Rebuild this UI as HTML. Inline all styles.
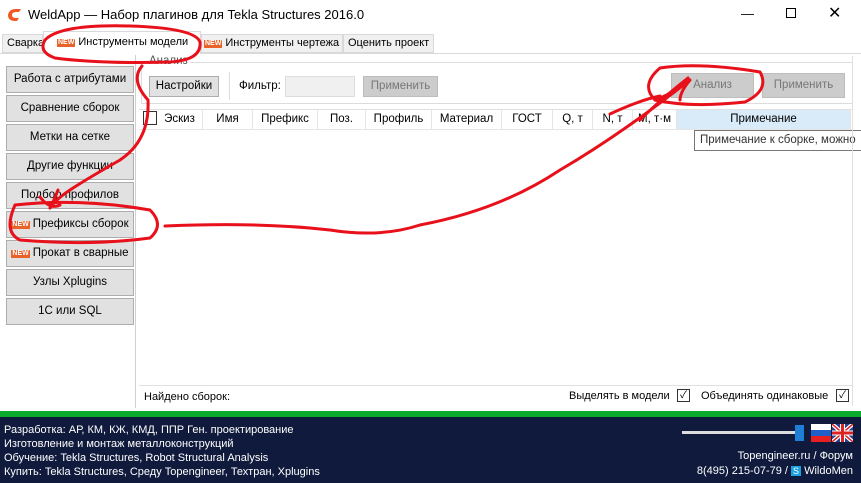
<!DOCTYPE html>
<html><head><meta charset="utf-8"><style>
*{margin:0;padding:0;box-sizing:border-box}
body{width:861px;height:483px;overflow:hidden;background:#fff;font-family:"Liberation Sans","Noto Sans CJK SC",sans-serif;font-size:11.5px;color:#000;position:relative}
.a{position:absolute;white-space:nowrap}
.btn{position:absolute;left:6px;width:128px;height:27px;background:#e1e1e1;border:1px solid #adadad;text-align:center;line-height:25px;font-size:11.5px;white-space:nowrap}
.new{display:inline-block;background:#e8622a;color:#fff;font-size:7px;line-height:8px;padding:0 1px;vertical-align:1px;margin-right:3px;font-weight:bold}
.th{position:absolute;top:110px;height:19px;line-height:19px;text-align:center;border-right:1px solid #e5e5e5;font-size:11.5px;white-space:nowrap;overflow:hidden}
.ft{position:absolute;color:#fff;font-size:11px;left:4px;white-space:nowrap}
.tab{position:absolute;top:34px;height:19px;background:#f0f0f0;border:1px solid #d9d9d9;line-height:17px;white-space:nowrap;font-size:11px;overflow:hidden}
</style></head><body>
<svg class="a" style="left:6px;top:8px" width="16" height="14"><path d="M2 7 Q3 1 10 1 L15 1 L13 4 L10 4 Q6 4 6 7 Q6 10 10 10 L13 10 L11 13 L9 13 Q2 13 2 7Z" fill="#f05a22"/></svg>
<div class="a" style="left:28px;top:7px;font-size:13px">WeldApp — Набор плагинов для Tekla Structures 2016.0</div>
<div class="a" style="left:741px;top:6px;font-size:13px">—</div>
<div class="a" style="left:786px;top:8px;width:10px;height:10px;border:1px solid #000"></div>
<div class="a" style="left:828px;top:3px;font-size:16px">✕</div>
<!-- tabs -->
<div class="a" style="left:0;top:53px;width:861px;height:1px;background:#d9d9d9"></div>
<div class="tab" style="left:2px;width:41px;padding-left:4px">Сварка</div>
<div class="a" style="left:43px;top:31px;width:158px;height:23px;background:#fff;border:1px solid #d9d9d9;border-bottom:none;line-height:21px;padding-left:13px;font-size:11px"><span class="new">NEW</span>Инструменты модели</div>
<div class="tab" style="left:201px;width:142px;padding-left:2px"><span class="new">NEW</span>Инструменты чертежа</div>
<div class="tab" style="left:343px;width:91px;padding-left:4px">Оценить проект</div>
<!-- left panel -->
<div class="a" style="left:135px;top:55px;width:1px;height:353px;background:#d0d0d0"></div>
<div class="btn" style="top:66px">Работа с атрибутами</div>
<div class="btn" style="top:95px">Сравнение сборок</div>
<div class="btn" style="top:124px">Метки на сетке</div>
<div class="btn" style="top:153px">Другие функции</div>
<div class="btn" style="top:182px">Подбор профилов</div>
<div class="btn" style="top:211px"><span class="new">NEW</span>Префиксы сборок</div>
<div class="btn" style="top:240px"><span class="new">NEW</span>Прокат в сварные</div>
<div class="btn" style="top:269px">Узлы Xplugins</div>
<div class="btn" style="top:298px">1С или SQL</div>
<!-- group -->
<div class="a" style="left:141px;top:62px;width:712px;height:42px;border:1px solid #dcdcdc"></div>
<div class="a" style="left:147px;top:55px;background:#fff;padding:0 2px;color:#555">Анализ</div>
<div class="a" style="left:149px;top:76px;width:70px;height:21px;background:#e1e1e1;border:1px solid #adadad;text-align:center;line-height:19px">Настройки</div>
<div class="a" style="left:229px;top:72px;width:1px;height:28px;background:#ddd"></div>
<div class="a" style="left:239px;top:80px">Фильтр:</div>
<div class="a" style="left:285px;top:76px;width:70px;height:21px;background:#f0f0f0;border:1px solid #ddd"></div>
<div class="a" style="left:363px;top:76px;width:75px;height:21px;background:#ccc;border:1px solid #bdbdbd;text-align:center;line-height:19px;color:#777">Применить</div>
<div class="a" style="left:671px;top:73px;width:83px;height:25px;background:#ccc;border:1px solid #bdbdbd;text-align:center;line-height:23px;color:#777">Анализ</div>
<div class="a" style="left:762px;top:73px;width:83px;height:25px;background:#ccc;border:1px solid #bdbdbd;text-align:center;line-height:23px;color:#777">Применить</div>
<!-- table -->
<div class="a" style="left:139px;top:109px;width:714px;height:1px;background:#e0e0e0"></div>
<div class="a" style="left:139px;top:129px;width:714px;height:1px;background:#e5e5e5"></div>
<div class="a" style="left:143px;top:111px;width:14px;height:14px;border:1px solid #333"></div>
<div class="th" style="left:157px;width:46px">Эскиз</div>
<div class="th" style="left:203px;width:50px">Имя</div>
<div class="th" style="left:253px;width:65px">Префикс</div>
<div class="th" style="left:318px;width:48px">Поз.</div>
<div class="th" style="left:366px;width:66px">Профиль</div>
<div class="th" style="left:432px;width:70px">Материал</div>
<div class="th" style="left:502px;width:51px">ГОСТ</div>
<div class="th" style="left:553px;width:40px">Q, т</div>
<div class="th" style="left:593px;width:40px">N, т</div>
<div class="th" style="left:633px;width:44px">М, т·м</div>
<div class="th" style="left:677px;width:174px;background:#d9ebf9">Примечание</div>
<div class="a" style="left:694px;top:130px;width:170px;height:21px;background:#fff;border:1px solid #767676;line-height:19px;padding-left:5px;color:#333;overflow:hidden">Примечание к сборке, можно</div>
<div class="a" style="left:852px;top:56px;width:1px;height:350px;background:#e0e0e0"></div>
<!-- status -->
<div class="a" style="left:139px;top:385px;width:714px;height:1px;background:#e0e0e0"></div>
<div class="a" style="left:144px;top:391px;font-size:11px">Найдено сборок:</div>
<div class="a" style="left:569px;top:390px;font-size:11px">Выделять в модели</div>
<div class="a" style="left:677px;top:389px;width:13px;height:13px;border:1px solid #333;font-size:10px;line-height:11px;text-align:center">✓</div>
<div class="a" style="left:701px;top:390px;font-size:11px">Объединять одинаковые</div>
<div class="a" style="left:836px;top:389px;width:13px;height:13px;border:1px solid #333;font-size:10px;line-height:11px;text-align:center">✓</div>
<!-- footer -->
<div class="a" style="left:0;top:411px;width:861px;height:6px;background:#0aaa2a"></div>
<div class="a" style="left:0;top:417px;width:861px;height:66px;background:#0f1a3c"></div>
<div class="ft" style="top:424px">Разработка: АР, КМ, КЖ, КМД, ППР Ген. проектирование</div>
<div class="ft" style="top:438px">Изготовление и монтаж металлоконструкций</div>
<div class="ft" style="top:452px">Обучение: Tekla Structures, Robot Structural Analysis</div>
<div class="ft" style="top:466px">Купить: Tekla Structures, Среду Topengineer, Техтран, Xplugins</div>
<div class="a" style="left:682px;top:431px;width:120px;height:3px;background:#ddd"></div>
<div class="a" style="left:795px;top:425px;width:9px;height:16px;background:#1d7fd6"></div>
<div class="a" style="left:811px;top:424px;width:20px;height:18px;background:linear-gradient(#fff 33%,#1f5fc9 33% 66%,#e62020 66%)"></div>
<div class="a" style="left:832px;top:424px;width:21px;height:18px;background:#2b3f8f;overflow:hidden"><svg width="21" height="18"><path d="M0 0L21 18M21 0L0 18" stroke="#fff" stroke-width="4"/><path d="M0 0L21 18M21 0L0 18" stroke="#d22" stroke-width="1.5"/><path d="M10.5 0V18M0 9H21" stroke="#fff" stroke-width="5"/><path d="M10.5 0V18M0 9H21" stroke="#d22" stroke-width="3"/></svg></div>
<div class="a" style="right:8px;top:450px;color:#fff;font-size:11px">Topengineer.ru / Форум</div>
<div class="a" style="right:8px;top:465px;color:#fff;font-size:11px">8(495) 215-07-79 / <span style="background:#1ba0e1;font-size:9px;padding:0 2px">S</span> WildoMen</div>
<!-- red annotations -->
<svg class="a" style="left:0;top:0" width="861" height="483"><g fill="none" stroke="#e8101a" stroke-width="3" stroke-linecap="round">
<path d="M45 40 Q60 24 130 26 Q195 28 200 42 Q202 60 170 62 Q100 64 55 58 Q38 52 45 40"/>
<path d="M142 66 Q130 80 148 100 Q150 140 120 160 Q85 180 70 190 Q55 200 50 208"/>
<path d="M40 197 Q50 210 60 205 M50 208 Q55 198 58 190"/>
<path d="M15 205 Q80 198 150 210 Q165 225 150 238 Q90 246 20 240 Q3 232 15 205"/>
<path d="M165 226 Q260 222 330 230 Q380 238 420 225 Q500 210 560 170 Q620 135 690 80"/>
<path d="M655 100 Q670 95 690 80 Q680 92 680 100"/>
<path d="M610 114 Q640 100 660 96 M640 120 Q660 100 688 78"/>
<path d="M660 68 Q700 62 760 72 Q770 90 745 102 Q690 108 655 100 Q640 85 660 68"/>
</g></svg>
</body></html>
